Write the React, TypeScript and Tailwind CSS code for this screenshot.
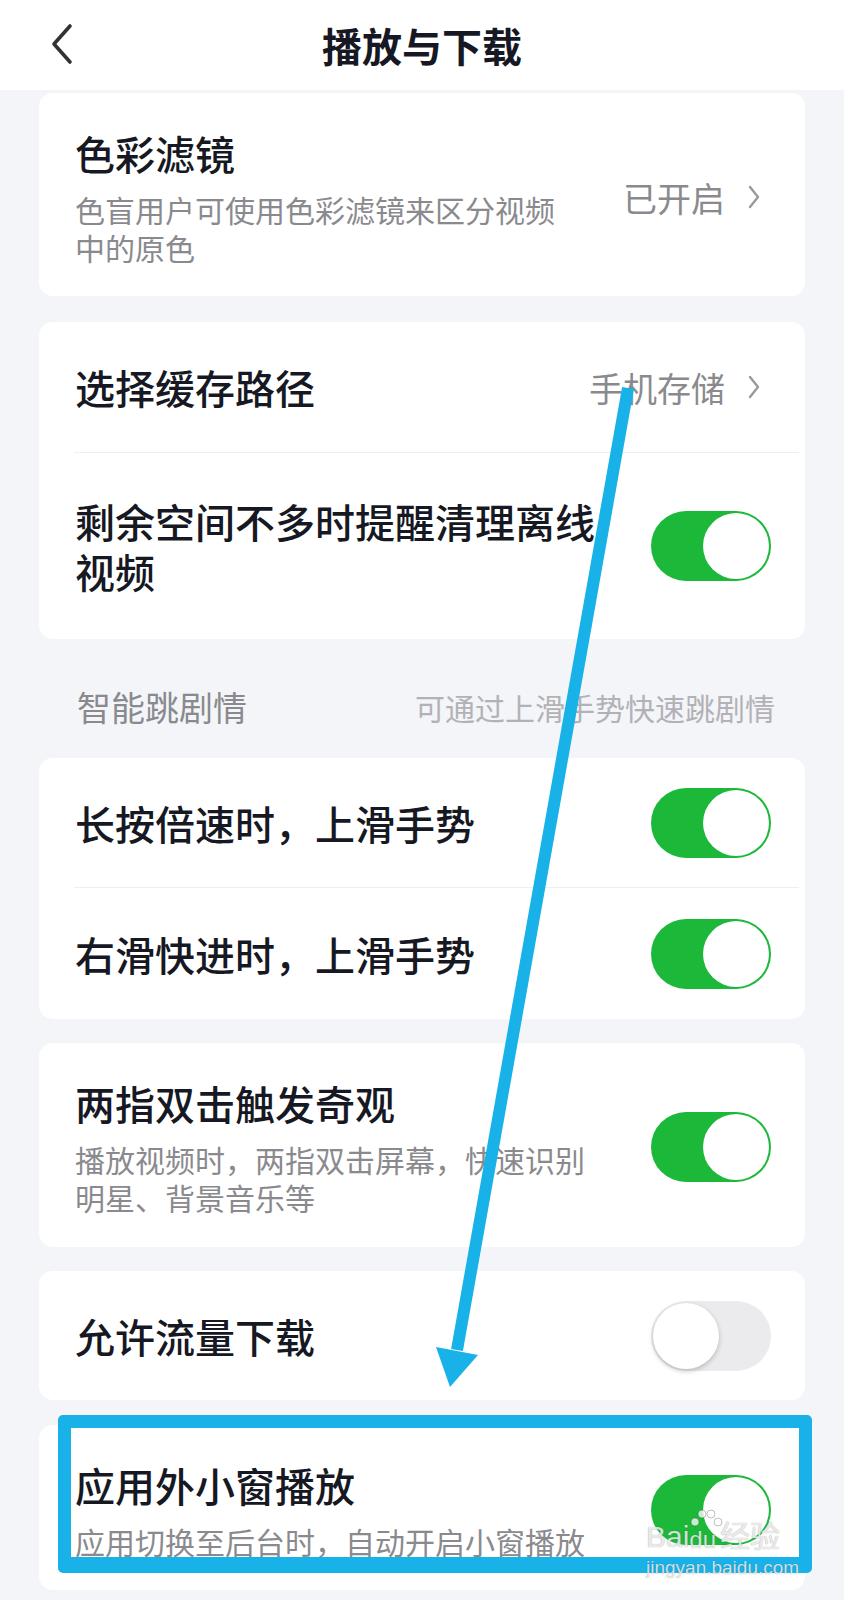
import React from "react";

const font = { fontFamily: '"Noto Sans CJK SC", "Noto Sans", sans-serif' };

// green / grey switch
const Toggle = ({ on }: { on: boolean }) =>
  on ? (
    <div className="flex h-[70px] w-[120px] shrink-0 items-center justify-end rounded-full bg-[#1cb83a] p-[2px]">
      <div className="h-[66px] w-[66px] rounded-full bg-white" />
    </div>
  ) : (
    <div className="flex h-[70px] w-[120px] shrink-0 items-center rounded-full bg-[#ebebed] p-[2px]">
      <div className="h-[66px] w-[66px] rounded-full bg-white shadow-[0_2px_5px_rgba(0,0,0,0.22)]" />
    </div>
  );

const Chevron = () => (
  <svg width="14" height="24" viewBox="0 0 14 24" className="shrink-0">
    <path d="M3 2 L11 12 L3 22" fill="none" stroke="#9a9a9a" strokeWidth="2.4" strokeLinecap="round" strokeLinejoin="round" />
  </svg>
);

const Divider = () => <div className="ml-[35px] mr-[6px] h-px bg-[#eeeff2]" />;

const Title = ({ children }: { children: React.ReactNode }) => (
  <div className="text-[40px] font-medium leading-[50px] text-[#161823]">{children}</div>
);

const Desc = ({ children }: { children: React.ReactNode }) => (
  <div className="mt-[12px] text-[30px] leading-[38px] text-[#8a8a8e]">{children}</div>
);

const SwitchRow = ({ title, on, h }: { title: string; on: boolean; h: string }) => (
  <div className={`flex items-center justify-between pl-[36px] pr-[34px] ${h}`}>
    <Title>{title}</Title>
    <Toggle on={on} />
  </div>
);

export default function App() {
  return (
    <div style={font} className="relative min-h-[1600px] w-[844px] overflow-hidden bg-[#f3f5f9]">
      {/* header */}
      <div className="relative flex h-[90px] items-center justify-center bg-white">
        <svg width="24" height="42" viewBox="0 0 24 42" className="absolute left-[50px] top-[23px]">
          <path d="M20 3 L4 21 L20 39" fill="none" stroke="#333333" strokeWidth="3.6" strokeLinecap="round" strokeLinejoin="round" />
        </svg>
        <div className="text-[40px] font-bold leading-none text-[#161823]">播放与下载</div>
      </div>

      <div className="flex flex-col px-[39px] pt-[3px]">
        {/* colour filter */}
        <div className="flex items-center rounded-[14px] bg-white pb-[30px] pl-[36px] pr-[44px] pt-[35px]">
          <div className="flex-1">
            <Title>色彩滤镜</Title>
            <div className="max-w-[500px]">
              <Desc>色盲用户可使用色彩滤镜来区分视频中的原色</Desc>
            </div>
          </div>
          <div className="flex items-center gap-[22px]">
            <span className="text-[34px] text-[#8a8a8e]">已开启</span>
            <Chevron />
          </div>
        </div>

        {/* cache */}
        <div className="mt-[26px] rounded-[14px] bg-white">
          <div className="flex h-[130px] items-center justify-between pl-[36px] pr-[44px]">
            <Title>选择缓存路径</Title>
            <div className="flex items-center gap-[22px]">
              <span className="text-[34px] text-[#8a8a8e]">手机存储</span>
              <Chevron />
            </div>
          </div>
          <Divider />
          <div className="flex h-[186px] items-center justify-between pl-[36px] pr-[34px]">
            <div className="w-[540px]">
              <Title>剩余空间不多时提醒清理离线视频</Title>
            </div>
            <Toggle on />
          </div>
        </div>

        {/* section label */}
        <div className="flex items-center justify-between pb-[31px] pl-[38px] pr-[30px] pt-[48px] leading-[40px]">
          <span className="text-[34px] text-[#8a8a8e]">智能跳剧情</span>
          <span className="text-[30px] text-[#b2b2b6]">可通过上滑手势快速跳剧情</span>
        </div>

        <div className="rounded-[14px] bg-white">
          <SwitchRow title="长按倍速时，上滑手势" on h="h-[129px]" />
          <Divider />
          <SwitchRow title="右滑快进时，上滑手势" on h="h-[131px]" />
        </div>

        {/* wonder */}
        <div className="mt-[24px] flex items-center justify-between rounded-[14px] bg-white pb-[31px] pl-[36px] pr-[34px] pt-[35px]">
          <div className="max-w-[525px]">
            <Title>两指双击触发奇观</Title>
            <Desc>播放视频时，两指双击屏幕，快速识别明星、背景音乐等</Desc>
          </div>
          <Toggle on />
        </div>

        {/* mobile data */}
        <div className="mt-[24px] rounded-[14px] bg-white">
          <SwitchRow title="允许流量下载" on={false} h="h-[129px]" />
        </div>

        {/* floating window */}
        <div className="mt-[25px] flex items-center justify-between rounded-[14px] bg-white pb-[30px] pl-[36px] pr-[34px] pt-[35px]">
          <div>
            <Title>应用外小窗播放</Title>
            <Desc>应用切换至后台时，自动开启小窗播放</Desc>
          </div>
          <Toggle on />
        </div>
      </div>

      {/* annotation: arrow */}
      <svg width="844" height="1600" viewBox="0 0 844 1600" className="pointer-events-none absolute left-0 top-0">
        <line x1="628" y1="388" x2="457" y2="1350" stroke="#18b2e9" strokeWidth="12" />
        <polygon points="436,1347 478,1355 450,1387" fill="#18b2e9" />
      </svg>

      {/* annotation: highlight box */}
      <div className="pointer-events-none absolute left-[58px] top-[1415px] h-[158px] w-[754px] rounded-[5px] border-[13px] border-b-[16px] border-[#18b2e9]" />

      {/* watermark */}
      <div className="pointer-events-none absolute left-[646px] top-[1522px] flex flex-col items-start text-white/80 [text-shadow:0_0_1px_rgba(0,0,0,0.45)]">
        <div className="flex items-end leading-none" style={{ fontFamily: '"Liberation Sans", "Noto Sans CJK SC", sans-serif' }}>
          <span className="text-[30px]">Bai</span>
          <span className="relative text-[24px]">
            <svg width="34" height="22" viewBox="0 0 34 22" className="absolute -top-[20px] left-0">
              <circle cx="6" cy="14" r="4" fill="rgba(255,255,255,0.75)" stroke="rgba(0,0,0,0.25)" />
              <circle cx="13" cy="6" r="4" fill="rgba(255,255,255,0.75)" stroke="rgba(0,0,0,0.25)" />
              <circle cx="22" cy="6" r="4" fill="rgba(255,255,255,0.75)" stroke="rgba(0,0,0,0.25)" />
              <circle cx="29" cy="14" r="4" fill="rgba(255,255,255,0.75)" stroke="rgba(0,0,0,0.25)" />
            </svg>
            du
          </span>
          <span className="ml-[4px] text-[30px]">经验</span>
        </div>
        <div className="mt-[6px] text-[19px] leading-none" style={{ fontFamily: '"Liberation Sans", sans-serif' }}>
          jingyan.baidu.com
        </div>
      </div>
    </div>
  );
}
